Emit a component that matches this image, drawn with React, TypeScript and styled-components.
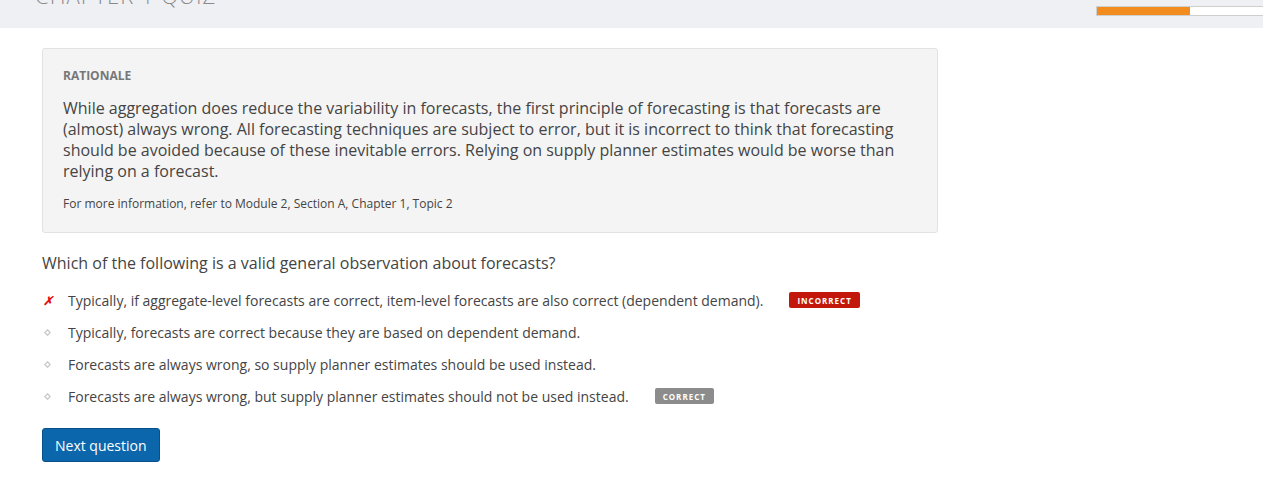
import styled, { createGlobalStyle } from 'styled-components';

const GlobalStyle = createGlobalStyle`
  body {
    margin: 0;
    background: #fff;
    font-family: "Open Sans", "Liberation Sans", sans-serif;
    color: #444;
  }
`;

const Header = styled.header`
  height: 28px;
  background: #eff0f4;
  display: flex;
  justify-content: space-between;
  align-items: flex-start;
  overflow: hidden;
`;

const Title = styled.h1`
  margin: -16px 0 0 35px;
  font-size: 22px;
  font-weight: 300;
  letter-spacing: 1px;
  color: #8a8a8a;
  line-height: 22px;
  white-space: nowrap;
`;

const Progress = styled.div`
  margin-top: 6px;
  width: 166px;
  height: 8px;
  background: #fff;
  border: 1px solid #cfcfcf;
  border-right: none;
  display: flex;
`;

const ProgressFill = styled.div`
  background: #f28c1e;
  height: 100%;
`;

const Main = styled.main`
  padding: 20px 0 0 42px;
  width: 896px;
`;

const Rationale = styled.section`
  background: #f4f4f4;
  border: 1px solid #e2e2e2;
  border-radius: 3px;
  padding: 19px 20px 20px;
`;

const Label = styled.div`
  font-size: 12px;
  font-weight: 700;
  color: #777;
  line-height: 16px;
`;

const Body = styled.p`
  margin: 14px 0 0;
  font-size: 16px;
  line-height: 21px;
  color: #444;
`;

const Reference = styled.p`
  margin: 14px 0 0;
  font-size: 12px;
  line-height: 16px;
  color: #444;
`;

const Question = styled.h2`
  margin: 19px 0 0;
  font-size: 16px;
  font-weight: 400;
  line-height: 22px;
  color: #444;
`;

const Options = styled.ul`
  list-style: none;
  margin: 10px 0 0;
  padding: 0;
`;

const Option = styled.li`
  display: flex;
  align-items: center;
  height: 32px;
  font-size: 14px;
  color: #444;
`;

const Marker = styled.span`
  width: 26px;
  flex-shrink: 0;
  display: flex;
  align-items: center;
`;

const Cross = styled.span`
  font-size: 12px;
  font-weight: 700;
  font-style: italic;
  color: #e5100c;
  margin-left: 1px;
`;

const Badge = styled.span<{ tone: 'bad' | 'ok' }>`
  margin-left: 26px;
  display: inline-flex;
  align-items: center;
  justify-content: center;
  height: 16px;
  padding: 0 8px;
  border-radius: 2px;
  font-size: 8px;
  font-weight: 700;
  letter-spacing: 1px;
  color: #fff;
  background: ${(p) => (p.tone === 'bad' ? '#c4170c' : '#8c8c8c')};
`;

const NextButton = styled.button`
  margin-top: 16px;
  height: 34px;
  padding: 0 12px;
  background: #0b66ab;
  color: #fff;
  border: 1px solid #07508a;
  border-radius: 3px;
  font-family: "Open Sans", "Liberation Sans", sans-serif;
  font-size: 14px;
  cursor: pointer;
`;

const Dot = () => (
  <svg width="7" height="7" viewBox="0 0 7 7" style={{ marginLeft: 2 }}>
    <path d="M3.5 0.8 L6.2 3.5 L3.5 6.2 L0.8 3.5 Z" fill="none" stroke="#c8c8c8" strokeWidth="1.3" />
  </svg>
);

const options = [
  {
    text: 'Typically, if aggregate-level forecasts are correct, item-level forecasts are also correct (dependent demand).',
    wrong: true,
    badge: 'INCORRECT' as const,
  },
  { text: 'Typically, forecasts are correct because they are based on dependent demand.' },
  { text: 'Forecasts are always wrong, so supply planner estimates should be used instead.' },
  {
    text: 'Forecasts are always wrong, but supply planner estimates should not be used instead.',
    badge: 'CORRECT' as const,
  },
];

export default function App() {
  return (
    <>
      <GlobalStyle />
      <Header>
        <Title>CHAPTER 1 QUIZ</Title>
        <Progress>
          <ProgressFill style={{ width: '56%' }} />
        </Progress>
      </Header>
      <Main>
        <Rationale>
          <Label>RATIONALE</Label>
          <Body>
            While aggregation does reduce the variability in forecasts, the first principle of forecasting is that
            forecasts are (almost) always wrong. All forecasting techniques are subject to error, but it is incorrect
            to think that forecasting should be avoided because of these inevitable errors. Relying on supply planner
            estimates would be worse than relying on a forecast.
          </Body>
          <Reference>For more information, refer to Module 2, Section A, Chapter 1, Topic 2</Reference>
        </Rationale>
        <Question>Which of the following is a valid general observation about forecasts?</Question>
        <Options>
          {options.map((o) => (
            <Option key={o.text}>
              <Marker>{o.wrong ? <Cross>✗</Cross> : <Dot />}</Marker>
              {o.text}
              {o.badge && <Badge tone={o.badge === 'INCORRECT' ? 'bad' : 'ok'}>{o.badge}</Badge>}
            </Option>
          ))}
        </Options>
        <NextButton>Next question</NextButton>
      </Main>
    </>
  );
}
